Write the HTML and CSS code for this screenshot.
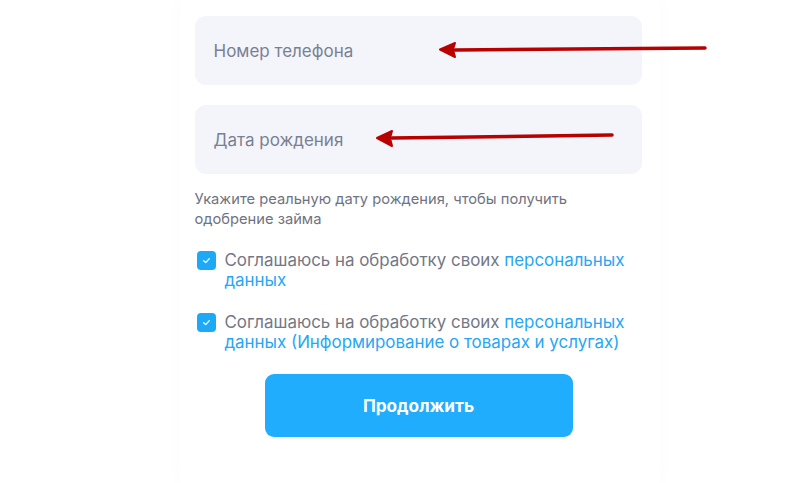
FILE: index.html
```html
<!DOCTYPE html>
<html lang="ru">
<head>
<meta charset="utf-8">
<link rel="stylesheet" href="styles.css">
</head>
<body>
<div class="page">
  <div class="card">
    <div class="field">Номер телефона</div>
    <div class="field">Дата рождения</div>
    <p class="hint">Укажите реальную дату рождения, чтобы получить<br>одобрение займа</p>
    <label class="check">
      <span class="box"><svg viewBox="0 0 20 20" width="20" height="20"><path d="M7 10.2 L9.2 12.2 L13 8" fill="none" stroke="#fff" stroke-width="1.4" stroke-linecap="round" stroke-linejoin="round"/></svg></span>
      <span class="label">
        <span class="line">Соглашаюсь на обработку своих <a class="link">персональных</a></span>
        <span class="line"><a class="link">данных</a></span>
      </span>
    </label>
    <label class="check">
      <span class="box"><svg viewBox="0 0 20 20" width="20" height="20"><path d="M7 10.2 L9.2 12.2 L13 8" fill="none" stroke="#fff" stroke-width="1.4" stroke-linecap="round" stroke-linejoin="round"/></svg></span>
      <span class="label">
        <span class="line">Соглашаюсь на обработку своих <a class="link">персональных</a></span>
        <span class="line"><a class="link">данных (Информирование о товарах и услугах)</a></span>
      </span>
    </label>
    <div class="actions"><button class="btn">Продолжить</button></div>
  </div>
  <svg class="arrows" width="800" height="483" viewBox="0 0 800 483">
    <path d="M705 48 L455 50" stroke="#b80000" stroke-width="3.5" stroke-linecap="round" fill="none"/>
    <path d="M440 49.5 L455 43 L453 49.5 L455 57 Z" fill="#b80000" stroke="#b80000" stroke-width="2" stroke-linejoin="round"/>
    <path d="M612 135 L392 138" stroke="#b80000" stroke-width="3.5" stroke-linecap="round" fill="none"/>
    <path d="M377 138 L392 131 L390 138 L392 146 Z" fill="#b80000" stroke="#b80000" stroke-width="2" stroke-linejoin="round"/>
  </svg>
</div>
</body>
</html>
```
FILE: styles.css
```css
* { box-sizing: border-box; }
html, body { margin: 0; padding: 0; background: #ffffff; }
body { font-family: Inter, "Noto Sans", sans-serif; }
.page {
  position: relative;
  width: 800px;
  height: 483px;
  overflow: hidden;
  display: flex;
  justify-content: center;
}
.card {
  width: 480px;
  margin-left: 39px;
  height: 483px;
  background: #fff;
  box-shadow: 0 0 18px rgba(0,0,0,0.025);
  padding: 16px 18px 0 15px;
  display: flex;
  flex-direction: column;
}
.field {
  height: 69px;
  background: #f3f5fa;
  border-radius: 11px;
  padding: 0 19px;
  display: flex;
  align-items: center;
  font-size: 17px;
  color: #7a8093;
  margin-bottom: 20px;
}
.field + .field { margin-bottom: 0; }
.hint {
  margin: 15px 0 0 0;
  font-size: 14.7px;
  line-height: 20px;
  color: #6f7382;
}
.check {
  display: flex;
  align-items: flex-start;
  gap: 9px;
  margin-top: 21px;
  padding-left: 2px;
  font-size: 16.9px;
  line-height: 20px;
  color: #737786;
}
.check + .check { margin-top: 22px; }
.label { display: flex; flex-direction: column; }
.line { display: block; white-space: nowrap; }
.box {
  flex: none;
  width: 19px;
  height: 19px;
  margin-top: 1px;
  border-radius: 4px;
  background: #1ea9f7;
  display: flex;
  align-items: center;
  justify-content: center;
}
.box svg { width: 19px; height: 19px; }
.link { color: #27a6f5; text-decoration: none; }
.actions {
  display: flex;
  justify-content: center;
  margin-top: 22px;
  padding-left: 1px;
}
.btn {
  width: 308px;
  height: 63px;
  border: none;
  border-radius: 9px;
  background: #20adfd;
  color: #fff;
  font-family: Inter, "Noto Sans", sans-serif;
  font-weight: 700;
  font-size: 17.2px;
}
.arrows { position: absolute; left: 0; top: 0; pointer-events: none; }
```
